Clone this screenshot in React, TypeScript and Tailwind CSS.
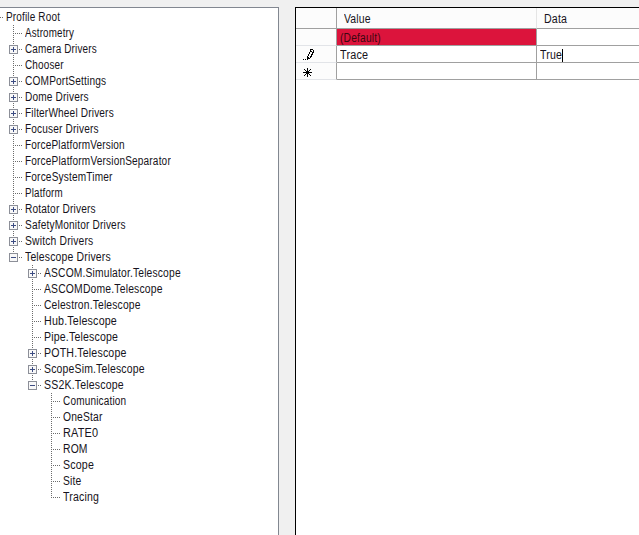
import { useLayoutEffect, useRef, useState } from "react";

type Mark = "plus" | "minus" | "leaf";
type Node = { label: string; depth: number; mark: Mark; width: number; last?: boolean };

const nodes: Node[] = [
  { label: "Astrometry", depth: 1, mark: "leaf", width: 49 },
  { label: "Camera Drivers", depth: 1, mark: "plus", width: 72 },
  { label: "Chooser", depth: 1, mark: "leaf", width: 39 },
  { label: "COMPortSettings", depth: 1, mark: "plus", width: 81 },
  { label: "Dome Drivers", depth: 1, mark: "plus", width: 64 },
  { label: "FilterWheel Drivers", depth: 1, mark: "plus", width: 89 },
  { label: "Focuser Drivers", depth: 1, mark: "plus", width: 74 },
  { label: "ForcePlatformVersion", depth: 1, mark: "leaf", width: 99.5 },
  { label: "ForcePlatformVersionSeparator", depth: 1, mark: "leaf", width: 146 },
  { label: "ForceSystemTimer", depth: 1, mark: "leaf", width: 87.5 },
  { label: "Platform", depth: 1, mark: "leaf", width: 37.5 },
  { label: "Rotator Drivers", depth: 1, mark: "plus", width: 71 },
  { label: "SafetyMonitor Drivers", depth: 1, mark: "plus", width: 101 },
  { label: "Switch Drivers", depth: 1, mark: "plus", width: 68 },
  { label: "Telescope Drivers", depth: 1, mark: "minus", width: 86, last: true },
  { label: "ASCOM.Simulator.Telescope", depth: 2, mark: "plus", width: 137 },
  { label: "ASCOMDome.Telescope", depth: 2, mark: "leaf", width: 118.5 },
  { label: "Celestron.Telescope", depth: 2, mark: "leaf", width: 97 },
  { label: "Hub.Telescope", depth: 2, mark: "leaf", width: 73 },
  { label: "Pipe.Telescope", depth: 2, mark: "leaf", width: 74 },
  { label: "POTH.Telescope", depth: 2, mark: "plus", width: 83 },
  { label: "ScopeSim.Telescope", depth: 2, mark: "plus", width: 101 },
  { label: "SS2K.Telescope", depth: 2, mark: "minus", width: 80, last: true },
  { label: "Comunication", depth: 3, mark: "leaf", width: 63.5 },
  { label: "OneStar", depth: 3, mark: "leaf", width: 39.5 },
  { label: "RATE0", depth: 3, mark: "leaf", width: 35.5 },
  { label: "ROM", depth: 3, mark: "leaf", width: 25 },
  { label: "Scope", depth: 3, mark: "leaf", width: 31 },
  { label: "Site", depth: 3, mark: "leaf", width: 18 },
  { label: "Tracing", depth: 3, mark: "leaf", width: 36, last: true },
];

/* Slightly tracked text, condensed so that it fills the given width. */
function Label({ text, width }: { text: string; width: number }) {
  const ref = useRef<HTMLSpanElement>(null);
  const [scale, setScale] = useState(1);
  useLayoutEffect(() => {
    if (ref.current) setScale(width / ref.current.offsetWidth);
  }, [text, width]);
  return (
    <div style={{ width }}>
      <span
        ref={ref}
        className="inline-block origin-left tracking-[0.2px] whitespace-pre"
        style={{ transform: `scaleX(${scale})` }}
      >
        {text}
      </span>
    </div>
  );
}

function Branch({ mark, last }: { mark: Mark; last?: boolean }) {
  return (
    <div className="grid h-4 w-[19px] shrink-0">
      <div
        className={`col-start-1 row-start-1 ml-[9px] w-px bg-[repeating-linear-gradient(to_bottom,#6c6c6c_0_1px,transparent_1px_2px)] ${last ? "h-[9px]" : "h-4"}`}
      />
      <div className="col-start-1 row-start-1 mt-2 ml-[9px] h-px w-[9px] bg-[repeating-linear-gradient(to_right,#6c6c6c_0_1px,transparent_1px_2px)]" />
      {mark !== "leaf" && (
        <svg className="col-start-1 row-start-1 mt-1 ml-[5px]" width="9" height="9" shapeRendering="crispEdges">
          <rect x="0.5" y="0.5" width="8" height="8" fill="#f8f8f8" stroke="#8c8f98" />
          <path d="M2 4.5H7" stroke="#3c4c82" />
          {mark === "plus" && <path d="M4.5 2V7" stroke="#3c4c82" />}
        </svg>
      )}
    </div>
  );
}

function TreeRow({ node }: { node: Node }) {
  return (
    <div className="flex h-4 items-center pl-1">
      {node.depth === 2 && <div className="w-[19px] shrink-0" />}
      {node.depth === 3 && <div className="w-[38px] shrink-0" />}
      <Branch mark={node.mark} last={node.last} />
      <div className="pl-[2px] leading-4">
        <Label text={node.label} width={node.width} />
      </div>
    </div>
  );
}

function Pencil() {
  return (
    <svg width="12" height="12" shapeRendering="crispEdges" fill="#000">
      <path d="M7 0h3v1H7zM7 1h1v2H7zM10 1h1v3h-1zM6 3h1v2H6zM9 3h1v3H9zM8 2h1v1H8zM5 5h1v2H5zM8 5h1v3H8zM4 7h1v4H4zM7 7h1v2H7zM5 9h2v1H5zM5 8h1v1H5zM0 10h1v1H0zM2 10h1v1H2z" />
    </svg>
  );
}

function NewRow() {
  return (
    <svg width="9" height="9" shapeRendering="crispEdges" fill="#000">
      <path d="M4 0h1v9H4zM0 4h9v1H0zM1 1h1v1H1zM2 2h1v1H2zM3 3h3v3H3zM6 6h1v1H6zM7 7h1v1H7zM7 1h1v1H7zM6 2h1v1H6zM2 6h1v1H2zM1 7h1v1H1z" />
    </svg>
  );
}

const head = "border-r border-b border-r-[#e5e5e5] border-b-[#a0a0a0] bg-[#fcfcfc] flex items-center pt-[2px] pl-[7px]";
const side = "border-r border-b border-r-[#a0a0a0] border-b-[#e2e4e8] bg-[#fcfcfc] flex items-center pt-[2px] pl-[7px]";
const cell = "border-r border-b border-[#a0a0a0] flex items-center pt-[2px] pl-[3px]";

export default function App() {
  return (
    <div className="flex h-[535px] w-[639px] overflow-hidden bg-[#f0f0f0] pt-[7px] font-['Liberation_Sans',Arial,sans-serif] text-[12px] text-[#161320]">
      <section className="w-[279px] shrink-0 border-t border-r border-[#828790] bg-white pt-px">
        <div className="flex h-4 items-center">
          <div className="h-px w-1 bg-[repeating-linear-gradient(to_right,#6c6c6c_0_1px,transparent_1px_2px)]" />
          <div className="pl-[2px] leading-4">
            <Label text="Profile Root" width={54} />
          </div>
        </div>
        {nodes.map((node) => (
          <TreeRow key={node.label} node={node} />
        ))}
      </section>
      <section className="ml-4 h-full w-[344px] shrink-0 overflow-hidden border-t border-l border-black bg-white">
        <div className="grid w-[344px] grid-cols-[41px_200px_103px] grid-rows-[21px_17px_17px_17px] leading-[14px]">
          <div className="border-r border-b border-[#a0a0a0] bg-[#fcfcfc]" />
          <div className={head}>
            <Label text="Value" width={27} />
          </div>
          <div className={head}>
            <Label text="Data" width={23} />
          </div>

          <div className={side} />
          <div className={`${cell} bg-[#dc143c] text-[#3b0710]`}>
            <Label text="(Default)" width={41} />
          </div>
          <div className={cell} />

          <div className={side}>
            <Pencil />
          </div>
          <div className={cell}>
            <Label text="Trace" width={28} />
          </div>
          <div className={cell}>
            <Label text="True" width={22} />
            <div className="h-[13px] w-px bg-black" />
          </div>

          <div className={side}>
            <NewRow />
          </div>
          <div className={cell} />
          <div className={cell} />
        </div>
      </section>
    </div>
  );
}
